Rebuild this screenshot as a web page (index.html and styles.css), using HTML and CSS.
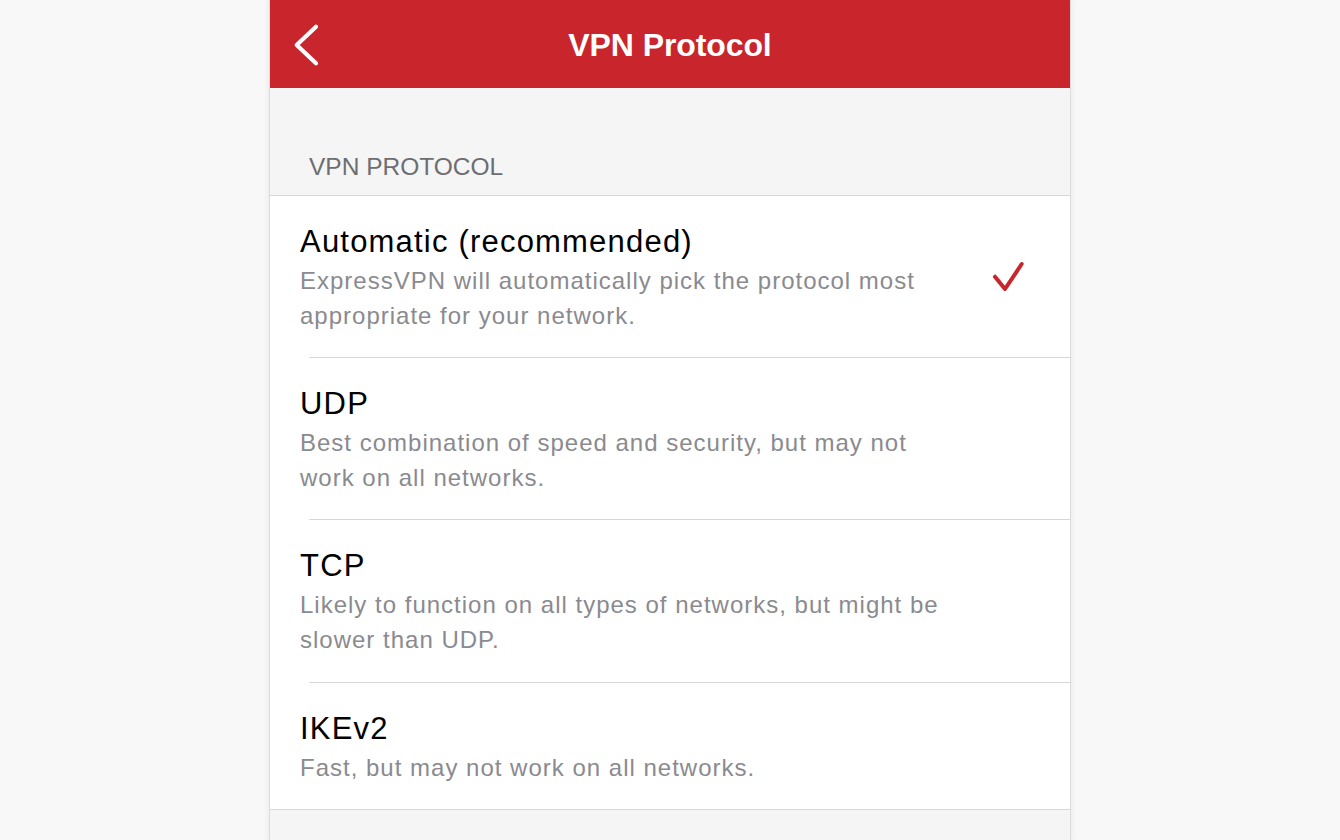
FILE: index.html
```html
<!DOCTYPE html>
<html>
<head>
<meta charset="utf-8">
<link rel="stylesheet" href="styles.css">
</head>
<body>
<div class="phone">
  <header class="topbar">
    <svg class="back" width="40" height="50" viewBox="0 0 40 50">
      <polyline points="26,6.7 6.7,25 26,43.3" fill="none" stroke="#fff" stroke-width="4.2" stroke-linecap="round" stroke-linejoin="round"/>
    </svg>
    <h1 class="title">VPN Protocol</h1>
  </header>
  <div class="section-head">VPN PROTOCOL</div>
  <ul class="list">
    <li class="item">
      <div class="text">
        <div class="name">Automatic (recommended)</div>
        <div class="desc">ExpressVPN will automatically pick the protocol most appropriate for your network.</div>
      </div>
      <svg class="check" width="34" height="34" viewBox="0 0 34 34">
        <polyline points="4,18.7 14,31 30.7,6" fill="none" stroke="#c9252c" stroke-width="4" stroke-linecap="round" stroke-linejoin="round"/>
      </svg>
    </li>
    <li class="item">
      <div class="text">
        <div class="name">UDP</div>
        <div class="desc">Best combination of speed and security, but may not work on all networks.</div>
      </div>
    </li>
    <li class="item">
      <div class="text">
        <div class="name">TCP</div>
        <div class="desc">Likely to function on all types of networks, but might be slower than UDP.</div>
      </div>
    </li>
    <li class="item last">
      <div class="text">
        <div class="name">IKEv2</div>
        <div class="desc">Fast, but may not work on all networks.</div>
      </div>
    </li>
  </ul>
</div>
</body>
</html>
```

FILE: styles.css
```css
html, body {
  margin: 0;
  padding: 0;
  background: #f8f8f8;
  font-family: "Liberation Sans", Arial, sans-serif;
}
.phone {
  width: 800px;
  height: 840px;
  margin: 0 auto;
  background: #f5f5f5;
  box-shadow: 0 0 0 1px #dcdcdc, 0 0 6px 2px rgba(0,0,0,0.06);
  overflow: hidden;
}
.topbar {
  height: 88px;
  background: #c9252c;
  display: flex;
  align-items: center;
  justify-content: center;
  position: relative;
}
.back {
  position: absolute;
  left: 20px;
  top: 20px;
}
.title {
  margin: 0;
  color: #fff;
  font-size: 32px;
  font-weight: bold;
  letter-spacing: -0.1px;
  padding-top: 2px;
}
.section-head {
  height: 108px;
  box-sizing: border-box;
  padding: 0 0 14px 39px;
  display: flex;
  align-items: flex-end;
  font-size: 24.5px;
  color: #6d6d72;
  border-bottom: 1px solid #d8d8d8;
}
.list {
  list-style: none;
  margin: 0;
  padding: 0 0 0 39px;
  background: #fff;
  border-bottom: 1px solid #d8d8d8;
}
.item {
  display: flex;
  align-items: center;
  padding: 28px 40px 24px 0;
  border-bottom: 1px solid #d8d8d8;
}
.item:nth-child(3) {
  padding-bottom: 25px;
}
.item.last {
  border-bottom: none;
  padding-bottom: 24px;
}
.text {
  flex: 1;
  margin-left: -9px;
  max-width: 655px;
}
.name {
  font-size: 31px;
  line-height: 36px;
  color: #000;
  letter-spacing: 1.2px;
}
.desc {
  margin-top: 3px;
  font-size: 24px;
  line-height: 35px;
  color: #8a8a8f;
  letter-spacing: 1px;
}
.check {
  margin-left: auto;
  margin-right: 5px;
  margin-top: -8px;
}
```
